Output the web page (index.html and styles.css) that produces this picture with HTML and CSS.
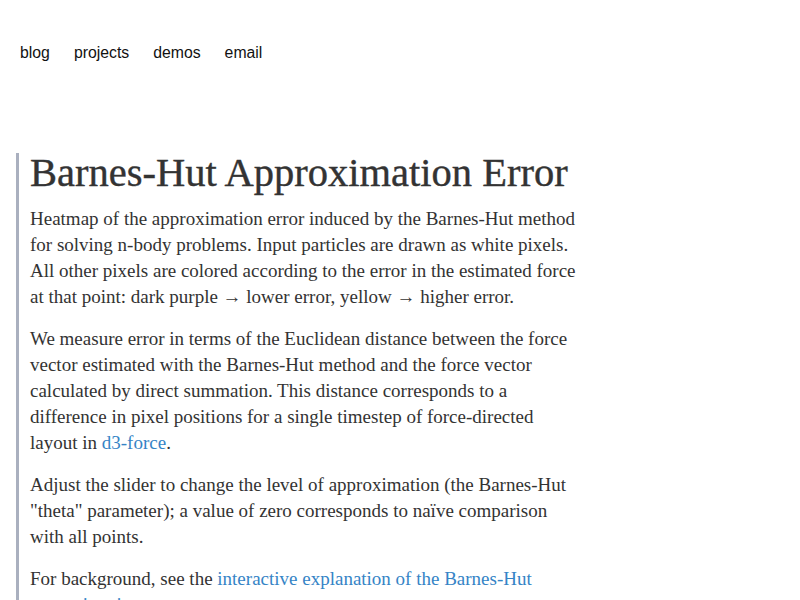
FILE: index.html
```html
<!DOCTYPE html>
<html>
<head>
<meta charset="utf-8">
<link rel="stylesheet" href="styles.css">
</head>
<body>
<nav class="nav">
  <a href="#">blog</a>
  <a href="#">projects</a>
  <a href="#">demos</a>
  <a href="#">email</a>
</nav>
<main class="article">
  <h1 class="title">Barnes-Hut Approximation Error</h1>
  <p>Heatmap of the approximation error induced by the Barnes-Hut method for solving n-body problems. Input particles are drawn as white pixels. All other pixels are colored according to the error in the estimated force at that point: dark purple → lower error, yellow → higher error.</p>
  <p>We measure error in terms of the Euclidean distance between the force vector estimated with the Barnes-Hut method and the force vector calculated by direct summation. This distance corresponds to a difference in pixel positions for a single timestep of force-directed layout in <a href="#" class="nowrap">d3-force</a>.</p>
  <p>Adjust the slider to change the level of approximation (the Barnes-Hut "theta" parameter); a value of zero corresponds to naïve comparison with all points.</p>
  <p>For background, see the <a href="#">interactive explanation of the Barnes-Hut approximation</a>.</p>
</main>
</body>
</html>
```
FILE: styles.css
```css
html, body {
  margin: 0;
  padding: 0;
  background: #fff;
}
.nav {
  display: flex;
  gap: 24px;
  padding: 43px 20px 0;
  font-family: "Liberation Sans", Arial, sans-serif;
  font-size: 15.8px;
  line-height: 20px;
}
.nav a {
  color: #111;
  text-decoration: none;
}
.article {
  margin: 90px 0 0 16px;
  border-left: 3px solid #aab0bf;
  padding: 0 0 0 11px;
  width: 552px;
  font-family: "Liberation Serif", "Times New Roman", serif;
  color: #333;
}
.title {
  margin: 0;
  font-size: 40.5px;
  font-weight: normal;
  line-height: 40px;
  color: #333;
  -webkit-text-stroke: 0.4px #333;
}
.article p {
  margin: 16px 0 0;
  font-size: 19px;
  line-height: 26px;
}
.article p:first-of-type {
  margin-top: 13px;
}
.article a {
  color: #3584c6;
  text-decoration: none;
}
.article a.nowrap {
  white-space: nowrap;
}
```
